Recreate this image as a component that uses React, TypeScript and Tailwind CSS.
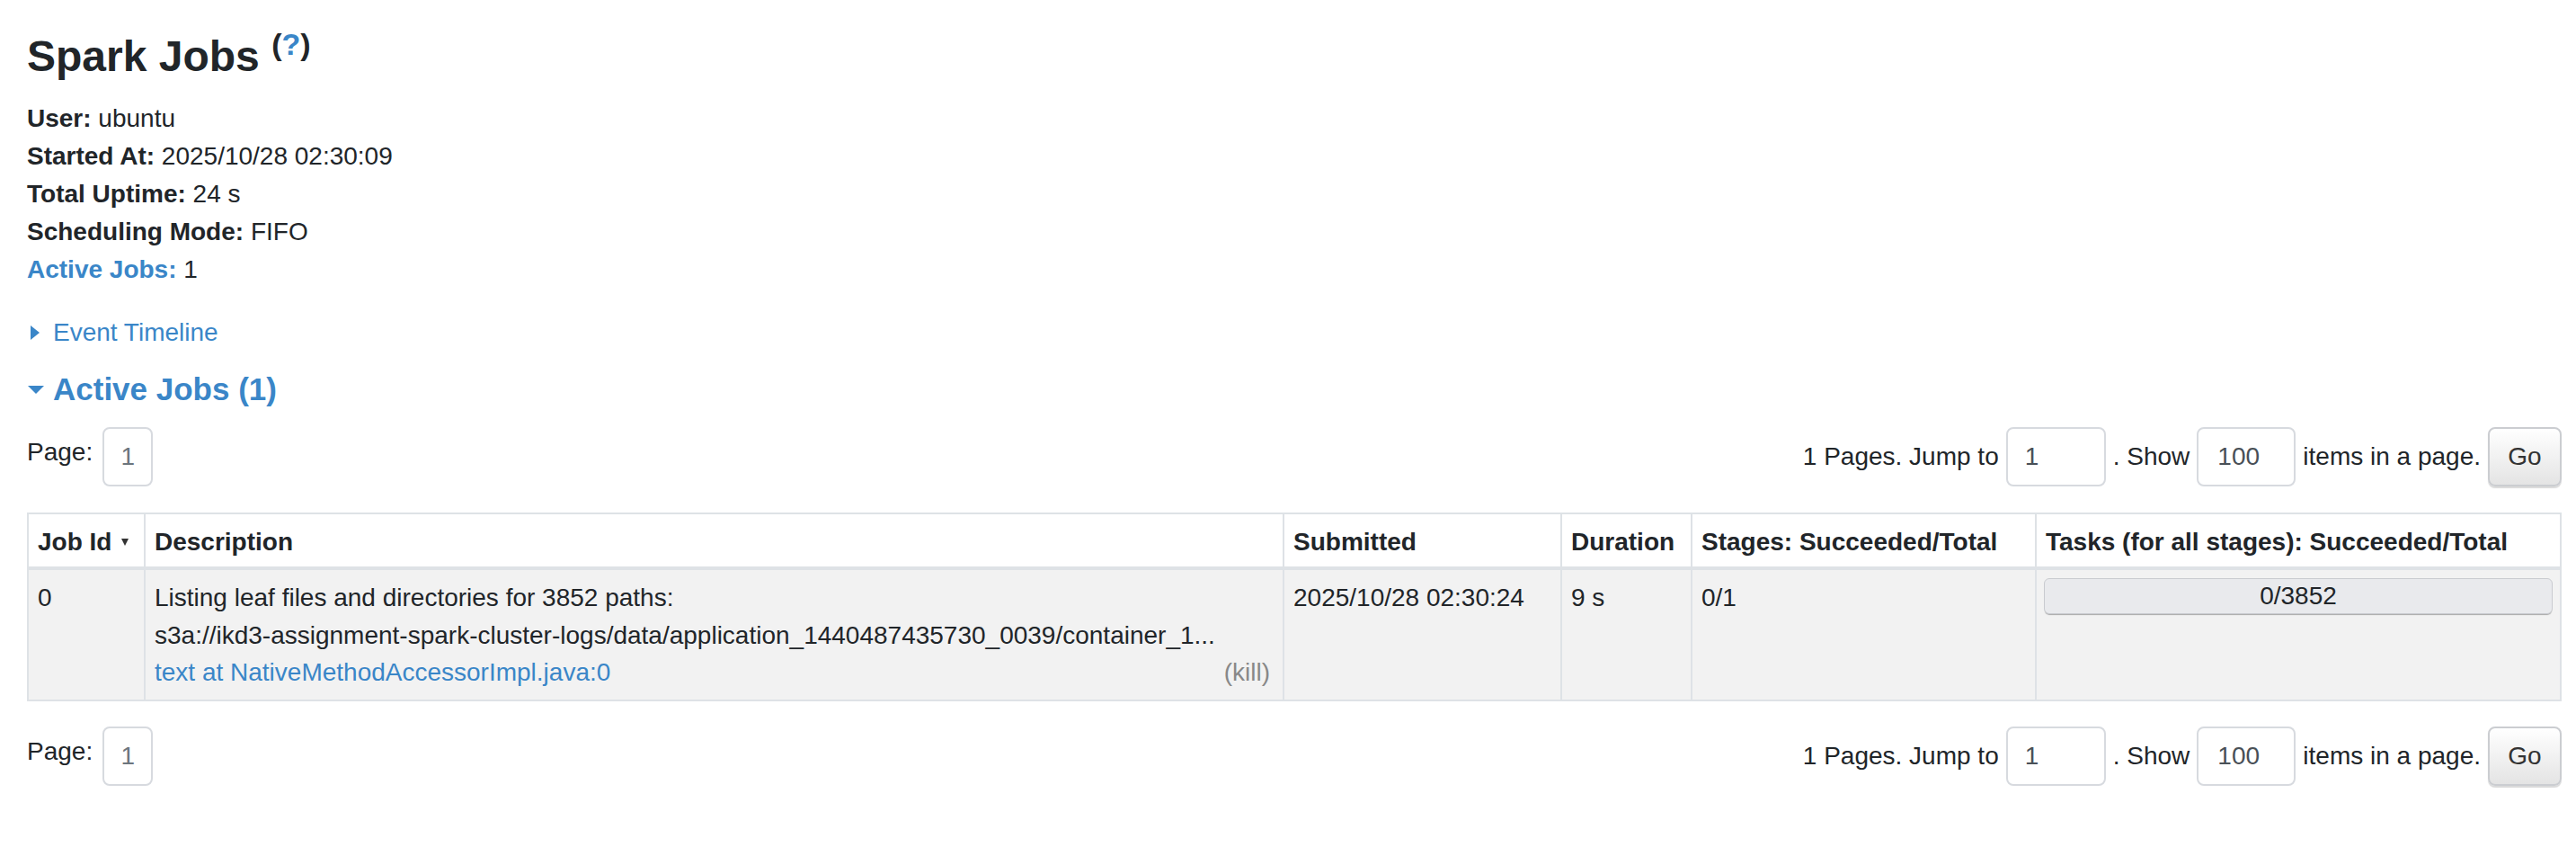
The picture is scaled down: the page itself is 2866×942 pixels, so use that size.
import React from 'react';

const BLUE = 'text-[#3a86c8]';

const Box = ({ value, className }: { value: string; className: string }) => (
  <div className={`h-[66px] flex items-center border-2 border-[#d7dadf] rounded-[8px] bg-white ${className}`}>
    {value}
  </div>
);

const Pagination = () => (
  <div className="flex items-center justify-between h-[66px]">
    <div className="flex items-center gap-[11px]">
      <span className="pb-[10px]">Page:</span>
      <Box value="1" className="w-[56px] justify-center text-[#6c757d]" />
    </div>
    <div className="flex items-center gap-[8px]">
      <span>1 Pages. Jump to</span>
      <Box value="1" className="w-[111px] pl-[19px] text-[#495057]" />
      <span>. Show</span>
      <Box value="100" className="w-[110px] pl-[21px] text-[#495057]" />
      <span>items in a page.</span>
      <button className="w-[82px] h-[66px] rounded-[8px] border-2 border-[#cbcdd1] bg-linear-to-b from-white to-[#e4e4e4] shadow-[0_2px_1px_rgba(0,0,0,0.15)] text-[#333]">
        Go
      </button>
    </div>
  </div>
);

const headers = [
  'Job Id',
  'Description',
  'Submitted',
  'Duration',
  'Stages: Succeeded/Total',
  'Tasks (for all stages): Succeeded/Total',
];

export default function App() {
  return (
    <div className="min-h-screen bg-white text-[#212529] text-[28px] leading-[42px] pl-[30px] pr-[16px] pt-[32px] font-['Liberation_Sans',Arial,sans-serif]">
      {/* Title */}
      <h3 className="text-[48px] leading-[58px] h-[58px] font-bold">
        Spark Jobs{' '}
        <span className="text-[34px] leading-none align-[18px]">
          (<a className={BLUE}>?</a>)
        </span>
      </h3>

      {/* Summary */}
      <ul className="mt-[21px]">
        <li><strong>User:</strong> ubuntu</li>
        <li><strong>Started At:</strong> 2025/10/28 02:30:09</li>
        <li><strong>Total Uptime:</strong> 24 s</li>
        <li><strong>Scheduling Mode:</strong> FIFO</li>
        <li><a className={`${BLUE} font-bold`}>Active Jobs:</a> 1</li>
      </ul>

      {/* Event timeline toggle */}
      <div className={`mt-[28px] h-[42px] flex items-center ${BLUE}`}>
        <span className="ml-[4px] w-0 h-0 border-y-[8px] border-y-transparent border-l-[10px] border-l-[#3a86c8]" />
        <span className="ml-[15px]">Event Timeline</span>
      </div>

      {/* Active jobs heading */}
      <div className={`mt-[21px] h-[42px] flex items-center text-[35px] font-bold ${BLUE}`}>
        <span className="ml-[1px] w-0 h-0 border-x-[9px] border-x-transparent border-t-[9px] border-t-[#3a86c8]" />
        <span className="ml-[10px]">Active Jobs (1)</span>
      </div>

      <div className="mt-[21px]">
        <Pagination />
      </div>

      {/* Jobs table */}
      <div className="mt-[29px] grid grid-cols-[130px_1267px_309px_145px_383px_584px] border-l-2 border-t-2 border-[#dee2e6]">
        {headers.map((h, i) => (
          <div
            key={h}
            className="border-r-2 border-b-4 border-[#dee2e6] bg-white px-[10px] pt-[10px] pb-[6px] font-bold whitespace-nowrap"
          >
            {h}
            {i === 0 && (
              <span className="inline-block ml-[11px] w-0 h-0 border-x-[4px] border-x-transparent border-t-[8px] border-t-[#333] align-[5px]" />
            )}
          </div>
        ))}

        <div className="border-r-2 border-b-2 border-[#dee2e6] bg-[#f2f2f2] px-[10px] pt-[10px] pb-[9px] leading-[41.5px]">0</div>
        <div className="border-r-2 border-b-2 border-[#dee2e6] bg-[#f2f2f2] px-[10px] pt-[10px] pb-[9px] leading-[41.5px] min-w-0">
          <div>Listing leaf files and directories for 3852 paths:</div>
          <div className="whitespace-nowrap overflow-hidden text-ellipsis">
            s3a://ikd3-assignment-spark-cluster-logs/data/application_1440487435730_0039/container_1...
          </div>
          <div className="flex justify-between">
            <a className={BLUE}>text at NativeMethodAccessorImpl.java:0</a>
            <a className="text-[#888] mr-[4px]">(kill)</a>
          </div>
        </div>
        <div className="border-r-2 border-b-2 border-[#dee2e6] bg-[#f2f2f2] px-[10px] pt-[10px] pb-[9px] leading-[41.5px] whitespace-nowrap">
          2025/10/28 02:30:24
        </div>
        <div className="border-r-2 border-b-2 border-[#dee2e6] bg-[#f2f2f2] px-[10px] pt-[10px] pb-[9px] leading-[41.5px]">9 s</div>
        <div className="border-r-2 border-b-2 border-[#dee2e6] bg-[#f2f2f2] px-[10px] pt-[10px] pb-[9px] leading-[41.5px]">0/1</div>
        <div className="border-r-2 border-b-2 border-[#dee2e6] bg-[#f2f2f2] px-[8px] pt-[9px]">
          <div className="h-[40px] rounded-[6px] border border-[#c9cbd0] bg-[#e9eaed] shadow-[0_2px_1px_-1px_rgba(0,0,0,0.3)] text-center leading-[38px]">
            0/3852
          </div>
        </div>
      </div>

      <div className="mt-[28px]">
        <Pagination />
      </div>
    </div>
  );
}
